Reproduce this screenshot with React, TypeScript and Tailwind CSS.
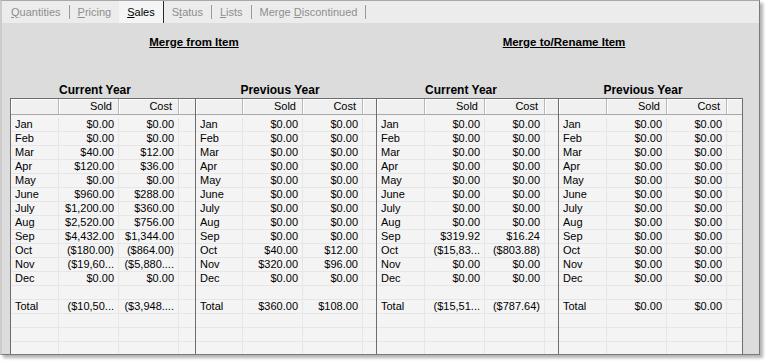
import React from 'react';

type Row = [string, string, string];

const months = ['Jan', 'Feb', 'Mar', 'Apr', 'May', 'June', 'July', 'Aug', 'Sep', 'Oct', 'Nov', 'Dec'];

const build = (vals: Record<string, [string, string]>, total: [string, string]): Row[] => [
  ...months.map((m): Row => [m, ...(vals[m] || ['$0.00', '$0.00'])] as Row),
  ['', '', ''],
  ['Total', total[0], total[1]],
  ['', '', ''],
  ['', '', ''],
  ['', '', ''],
];

const grids = [
  {
    label: 'Current Year',
    first: 'w-[48px]',
    filler: 'w-[16px]',
    last: false,
    rows: build(
      {
        Mar: ['$40.00', '$12.00'],
        Apr: ['$120.00', '$36.00'],
        June: ['$960.00', '$288.00'],
        July: ['$1,200.00', '$360.00'],
        Aug: ['$2,520.00', '$756.00'],
        Sep: ['$4,432.00', '$1,344.00'],
        Oct: ['($180.00)', '($864.00)'],
        Nov: ['($19,60...', '($5,880....'],
      },
      ['($10,50...', '($3,948....']
    ),
  },
  {
    label: 'Previous Year',
    first: 'w-[47px]',
    filler: 'w-[13px]',
    last: false,
    rows: build(
      {
        Oct: ['$40.00', '$12.00'],
        Nov: ['$320.00', '$96.00'],
      },
      ['$360.00', '$108.00']
    ),
  },
  {
    label: 'Current Year',
    first: 'w-[48px]',
    filler: 'w-[13px]',
    last: false,
    rows: build(
      {
        Sep: ['$319.92', '$16.24'],
        Oct: ['($15,83...', '($803.88)'],
      },
      ['($15,51...', '($787.64)']
    ),
  },
  {
    label: 'Previous Year',
    first: 'w-[48px]',
    filler: 'w-[15px]',
    last: true,
    rows: build({}, ['$0.00', '$0.00']),
  },
];

const tabs = [
  { name: 'Quantities', key: 'Q', rest: 'uantities' },
  { name: 'Pricing', key: 'P', rest: 'ricing' },
  { name: 'Sales', key: 'S', rest: 'ales', active: true },
  { name: 'Status', pre: 'S', key: 't', rest: 'atus' },
  { name: 'Lists', key: 'L', rest: 'ists' },
  { name: 'Merge Discontinued', pre: 'Merge\u00a0', key: 'D', rest: 'iscontinued' },
];

const Grid: React.FC<{ g: (typeof grids)[number] }> = ({ g }) => (
  <div className="flex flex-col">
    <div className="flex h-[16px] items-center">
      <div className="w-[170px] text-center text-[12px] font-bold leading-[16px] text-black">{g.label}</div>
    </div>
    <div
      className={`flex-1 flex flex-col overflow-hidden border-t border-l border-b border-[#6d6d6d] bg-[#f4f4f4] ${
        g.last ? 'border-r' : ''
      }`}
    >
      <div className="flex h-[16px] border-b border-[#a8a8a8] bg-[#f0f0f0] text-[11px] leading-[15px] text-black">
        <div className={`${g.first} border-r border-[#b8b8b8] shadow-[inset_1px_1px_0_#fff]`} />
        <div className="w-[60px] border-r border-[#b8b8b8] pr-[6px] text-right shadow-[inset_1px_1px_0_#fff]">Sold</div>
        <div className="w-[60px] border-r border-[#b8b8b8] pr-[6px] text-right shadow-[inset_1px_1px_0_#fff]">Cost</div>
        <div className={`${g.filler} shadow-[inset_1px_1px_0_#fff]`} />
      </div>
      <div className="pt-[3px]">
        {g.rows.map((r, i) => (
          <div key={i} className="flex h-[14px] border-b border-[#e6e6e6] text-[11px] leading-[13px] text-black">
            <div className={`${g.first} border-r border-[#e6e6e6] pl-[4px] whitespace-nowrap`}>{r[0]}</div>
            <div className="w-[60px] border-r border-[#e6e6e6] pr-[4px] text-right whitespace-nowrap">{r[1]}</div>
            <div className="w-[60px] border-r border-[#e6e6e6] pr-[4px] text-right whitespace-nowrap">{r[2]}</div>
            <div className={g.filler} />
          </div>
        ))}
      </div>
    </div>
  </div>
);

const App: React.FC = () => {
  return (
    <div className="min-h-screen bg-white font-['Liberation_Sans',Arial,sans-serif]">
      <div className="flex h-[355px] w-[760px] flex-col overflow-hidden border-t border-r border-b border-t-[#a8a8a8] border-r-[#7a7a7a] border-b-[#7a7a7a] border-l-2 border-l-[#cbcbcb] bg-[#dcdcdc] shadow-[3px_3px_3px_rgba(0,0,0,0.3)]">
        {/* Tab strip */}
        <div className="flex h-[22px] flex-none items-stretch bg-[#ececec] pl-[1px] text-[11px]">
          {tabs.map((t) => (
            <React.Fragment key={t.name}>
              <div
                className={`flex items-center px-[8px] ${
                  t.active ? 'bg-[#f5f5f5] text-black border-r border-[#2a2a2a]' : 'text-[#8e8e8e]'
                }`}
              >
                <span className="whitespace-nowrap">
                  {t.pre}
                  <span className="underline">{t.key}</span>
                  {t.rest}
                </span>
              </div>
              {!t.active && t.name !== 'Pricing' && <div className="my-[4px] w-px bg-[#9a9a9a]" />}
            </React.Fragment>
          ))}
        </div>

        {/* Content */}
        <div className="flex flex-1 flex-col pl-[8px]">
          <div className="flex h-[59px] pt-[12px] text-[11.5px] font-bold leading-[14px] text-black">
            <div className="w-[368px] text-center">
              <span className="underline">Merge from Item</span>
            </div>
            <div className="w-[372px] text-center">
              <span className="underline">Merge to/Rename Item</span>
            </div>
          </div>
          <div className="flex flex-1">
            {grids.map((g, i) => (
              <Grid key={i} g={g} />
            ))}
          </div>
        </div>
      </div>
    </div>
  );
};

export default App;
